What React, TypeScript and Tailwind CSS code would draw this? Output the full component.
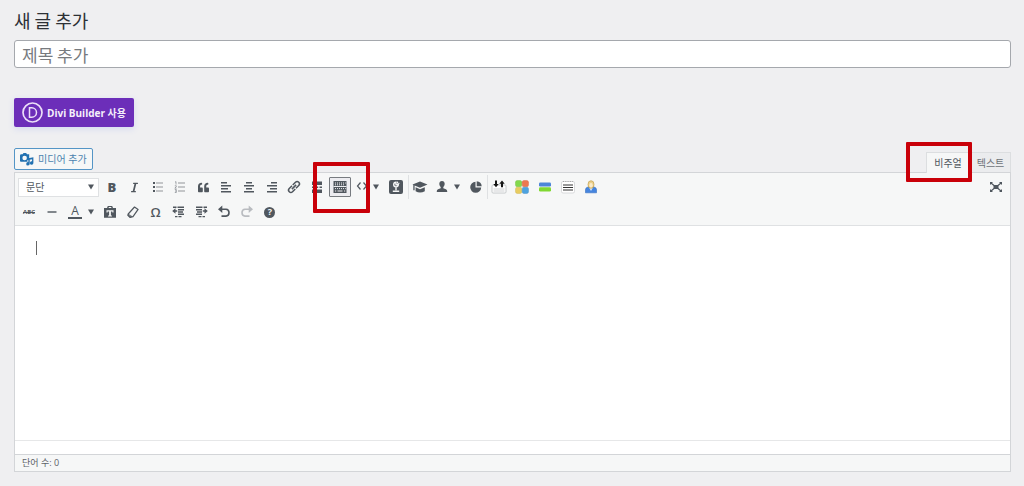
import type { ReactNode } from 'react';
import { FaItalic, FaQuoteLeft } from 'react-icons/fa';

function Icon({ children, className = 'size-4' }: { children: ReactNode; className?: string }) {
  return (
    <svg viewBox="0 0 16 16" className={className} fill="currentColor" aria-hidden="true">
      {children}
    </svg>
  );
}

function ToolButton({ label, children, className = 'w-[22px]' }: { label: string; children: ReactNode; className?: string }) {
  return (
    <button type="button" aria-label={label} className={`flex h-5 shrink-0 items-center justify-center ${className}`}>
      {children}
    </button>
  );
}

function Caret() {
  return (
    <svg viewBox="0 0 6 6" className="size-1.5" fill="currentColor" aria-hidden="true">
      <path d="M0 .5h6L3 5.5z" />
    </svg>
  );
}

function Divider() {
  return <span className="h-6 w-px shrink-0 bg-[#dfe1e3]" />;
}

function Highlight({ className }: { className: string }) {
  return <span className={`pointer-events-none absolute z-10 rounded-[1px] border-4 border-[#c90009] ${className}`} />;
}

function BulletList() {
  return (
    <Icon>
      <rect x="3" y="3" width="2" height="2" />
      <rect x="3" y="7" width="2" height="2" />
      <rect x="3" y="11" width="2" height="2" />
      <path opacity=".6" d="M6 3.500h7v1H6zM6 7.500h7v1H6zM6 11.500h7v1H6z" />
    </Icon>
  );
}

function NumberList() {
  return (
    <Icon>
      <path opacity=".6" d="M6 3.500h7v1H6zM6 7.500h7v1H6zM6 11.500h7v1H6z" />
      <path opacity=".6" fill="none" stroke="currentColor" strokeWidth=".8" d="M3 3.200l1-.6v3M2.800 6.800h1.500v.9L2.800 9.200h1.800M2.800 10.500h1.500v3H2.800M3 12h1.300" />
    </Icon>
  );
}

function AlignLeft() {
  return (
    <Icon>
      <path d="M3 3h6v1.600H3zM3 6h10v1.600H3zM3 9h7v1.600H3zM3 12h10v1.600H3z" />
    </Icon>
  );
}

function AlignCenter() {
  return (
    <Icon>
      <path d="M5 3h6v1.600H5zM3 6h10v1.600H3zM5 9h6v1.600H5zM3 12h10v1.600H3z" />
    </Icon>
  );
}

function AlignRight() {
  return (
    <Icon>
      <path d="M7 3h6v1.600H7zM3 6h10v1.600H3zM6 9h7v1.600H6zM3 12h10v1.600H3z" />
    </Icon>
  );
}

function LinkIcon() {
  return (
    <Icon>
      <g transform="rotate(-45 8 8)" fill="none" stroke="currentColor" strokeWidth="1.500">
        <path d="M7.500 5.700H3.600a2.300 2.300 0 0 0 0 4.600h3.900M8.500 5.700h3.900a2.300 2.300 0 0 1 0 4.600H8.500M5 8h6" />
      </g>
    </Icon>
  );
}

function ReadMore() {
  return (
    <Icon>
      <path d="M3 2.500h10V6H3zM3 10.500h10V14H3zM3 7.500h2.500v1.500H3zM6.800 7.500h2.400v1.500H6.800zM10.500 7.500H13v1.500h-2.500z" />
    </Icon>
  );
}

function Keyboard() {
  return (
    <Icon>
      <path d="M1.500 2h13v12h-13z" />
      <path
        fill="none"
        stroke="#ececf0"
        strokeWidth="1"
        d="M1.500 7.500h13M3 4h1M5 4h1M7 4h1M9 4h1M11 4h1M13 4h.8M3 5.800h1M5 5.800h1M7 5.800h1M9 5.800h1M11 5.800h1M3 9.600h1M5 9.600h1M7 9.600h1M9 9.600h1M11 9.600h1M13 9.600h.8M3 12h1.200M5.500 12h5M12 12h1.200"
      />
    </Icon>
  );
}

function CodeIcon() {
  return (
    <Icon>
      <path fill="none" stroke="currentColor" strokeWidth="1.200" d="M6.500 3.500L3.500 7l3 3.500M9.500 3.500l3 3.500-3 3.500" />
    </Icon>
  );
}

function BlockBadge() {
  return (
    <Icon>
      <rect x="1" y="1" width="14" height="14" rx="2" />
      <g fill="none" stroke="#f6f7f7" strokeWidth="1.400">
        <path d="M8 3.300a2.300 2.300 0 1 0 2.300 2.500H8z" />
        <path d="M9.500 2.600v1.700h2" strokeWidth="1" />
        <path d="M8 8.200v3M4.800 12.300h6.400" />
      </g>
    </Icon>
  );
}

function GradCap() {
  return (
    <Icon>
      <path d="M8 2.500l7.500 3L8 8.700 2.600 6.500v4.800H1.300V6L.5 5.500z" />
      <path d="M3.600 8.300L8 10.200l4.800-2v4Q8 15 3.600 12.200z" />
    </Icon>
  );
}

function Person() {
  return (
    <Icon>
      <path d="M8 2c1.700 0 2.700 1.200 2.700 2.800 0 1.600-.8 2.500-1.400 3.300v1.200c1.800.5 3.900 1.100 3.900 2.700v1H2.800v-1c0-1.600 2.100-2.200 3.900-2.700V8.100C6.100 7.300 5.300 6.400 5.300 4.800 5.300 3.200 6.300 2 8 2z" />
    </Icon>
  );
}

function Pie() {
  return (
    <Icon>
      <path d="M7.500 2.800v5.700h5.700A5.500 5.500 0 1 1 7.500 2.800z" />
      <path d="M8.700 2.300a5.300 5.300 0 0 1 5 5h-5z" />
    </Icon>
  );
}

function SpacerIcon() {
  return (
    <Icon>
      <rect x="1" y="6" width="14" height="8" rx="1" fill="#fff" stroke="#b9bcbf" strokeWidth=".8" />
      <path stroke="#cfd1d3" d="M2.500 10h11M2.500 12h11" />
      <path fill="#161616" d="M4 1.500h2V5h1.700L5 8.200 2.300 5H4zM10 8.200h2V4.700h1.700L11 1.500 8.300 4.700H10z" />
    </Icon>
  );
}

function ColorBlocks() {
  return (
    <Icon>
      <rect x="1.500" y="1.500" width="6.300" height="6.300" rx="1.700" fill="#83d94c" stroke="#69b83d" strokeWidth=".4" />
      <rect x="8.200" y="1.500" width="6.300" height="6.300" rx="1.700" fill="#ed7850" stroke="#d2603c" strokeWidth=".4" />
      <rect x="1.500" y="8.200" width="6.300" height="6.300" rx="1.700" fill="#e8cc60" stroke="#cbb04c" strokeWidth=".4" />
      <rect x="8.200" y="8.200" width="6.300" height="6.300" rx="1.700" fill="#4ea3df" stroke="#3985bd" strokeWidth=".4" />
    </Icon>
  );
}

function Bars() {
  return (
    <Icon>
      <rect x="2" y="3.500" width="12" height="4" rx="1.300" fill="#4d86d8" />
      <rect x="2" y="8.300" width="12" height="4.200" rx="1.300" fill="#80d832" />
    </Icon>
  );
}

function Note() {
  return (
    <Icon>
      <rect x="1.500" y="2.500" width="13" height="11.500" rx="1.500" fill="#fff" stroke="#d0d2d4" strokeWidth=".8" />
      <path stroke="#999" strokeWidth=".8" strokeDasharray="1 1.300" d="M3 2.500h10" />
      <path stroke="#333" d="M3 6h10M3 8.500h10M3 11h10" />
    </Icon>
  );
}

function Member() {
  return (
    <Icon>
      <path d="M2.500 13.800V10.500q0-2 2.500-2.500h6q2.500.5 2.500 2.500v3.300z" fill="#4585df" stroke="#356fc0" strokeWidth=".6" />
      <path d="M6 8.500L8 12l2-3.500z" fill="#dbe8fa" />
      <ellipse cx="8" cy="5.500" rx="3" ry="3.800" fill="#ecd08b" stroke="#c3a24f" strokeWidth=".7" />
      <ellipse cx="8" cy="6.300" rx="1.700" ry="2.300" fill="#fbeccb" />
    </Icon>
  );
}

function Fullscreen() {
  return (
    <Icon>
      <path d="M2 3h3L2 6zM14 3v3l-3-3zM2 13v-3l3 3zM14 13h-3l3-3z" />
      <path fill="none" stroke="currentColor" strokeWidth="1.200" d="M3 4l3 2.500M13 4l-3 2.500M3 12l3-2.500M13 12l-3-2.500" />
      <rect x="5.500" y="6" width="5" height="4" />
    </Icon>
  );
}

function Clipboard() {
  return (
    <Icon>
      <path fillRule="evenodd" d="M2 4h3l.8-2h4.400l.8 2h3v9.800H2zM6.500 4h3l-.4-1H6.900zM4.500 6.200v2.300h1.100v-1h1.500v4h-1v1.100h3.800v-1.100h-1v-4h1.500v1h1.100V6.200z" />
    </Icon>
  );
}

function Eraser() {
  return (
    <Icon>
      <path fill="none" stroke="currentColor" strokeWidth="1.200" strokeLinejoin="round" d="M9.500 3l3.600 2.400L8 12.600 5 13.400 2.900 11.300l.3-1.300z" />
      <path d="M3.200 9.500l4.600 3.100L5 13.800l-2.300-2.500z" opacity=".75" />
    </Icon>
  );
}

function Indent({ flip = false }: { flip?: boolean }) {
  return (
    <Icon>
      <g transform={flip ? 'translate(16 0) scale(-1 1)' : undefined}>
        <path d="M2 2.500h3.500v1.500H2zM6.500 2.500H13V4H6.500zM7 4.900h6v1.500H7zM7 7.200h5v1.500H7zM7 9.500h6V11H7zM4 11.900h2.500v1.300H4zM7.500 11.900h3v1.300h-3z" />
        <path d="M4.500 4.300v2h1.700v1.400H4.500v2L1.200 7z" />
      </g>
    </Icon>
  );
}

function Undo({ className = 'size-4' }: { className?: string }) {
  return (
    <Icon className={className}>
      <path d="M6.300 1.500v3H10q3.800.3 3.800 4.200 0 3.800-3.800 4.200H5.500v-1.600H10q2.200-.3 2.200-2.600T10 6.100H6.300v3L2 5.300z" />
    </Icon>
  );
}

function MediaIcon() {
  return (
    <Icon className="size-3.5">
      <path fillRule="evenodd" d="M1.500 2.500h1.500L4 1h3l1 1.500h2.500V9H8.500v2H1A1 1 0 0 1 0 10V4a1.500 1.500 0 0 1 1.500-1.500zM5.300 4.200a2.600 2.600 0 1 0 0 5.200 2.600 2.600 0 0 0 0-5.200z" />
      <path d="M9.500 7l5.800-1v6.500a2 2 0 1 1-1.500-1.900V8.400l-2.700.5v4.600a2 2 0 1 1-1.600-1.900z" />
    </Icon>
  );
}

export default function App() {
  return (
    <main className="min-h-screen bg-[#efeff1] pt-2 pr-[13px] pb-3.5 pl-3.5 font-['Open_Sans','Noto_Sans_CJK_KR',sans-serif] text-[#50575e]">
      <h1 className="text-lg leading-6 text-[#2c3035] font-['Noto_Sans_CJK_KR',sans-serif]">새 글 추가</h1>
      <input
        type="text"
        aria-label="제목 추가"
        placeholder="제목 추가"
        className="mt-2 block h-7 w-full rounded-[3px] border border-[#a5a8ad] bg-white px-[7px] font-['Noto_Sans_CJK_KR',sans-serif] text-[17px] leading-6 outline-none placeholder:text-[#777a7e]"
      />
      <button
        type="button"
        className="mt-[30px] flex h-[29px] items-center gap-1 rounded-[2px] bg-[#6c2eb9] px-2 text-[10px] leading-4 font-bold whitespace-nowrap text-[#f5effb] shadow-[0_2px_6px_#d5d9f0]"
      >
        <svg viewBox="0 0 21 21" className="size-[21px]" fill="none" stroke="#ecdff8" aria-hidden="true">
          <circle cx="10.500" cy="10.500" r="9.500" strokeWidth="1.700" />
          <path strokeWidth="1.500" d="M7.500 5.800h2.300a4.700 4.700 0 0 1 0 9.400H7.500z" />
        </svg>
        <span>Divi Builder 사용</span>
      </button>

      <div className="mt-[21px] flex h-6 justify-between">
        <button
          type="button"
          className="flex h-[22px] items-center gap-1 rounded-[2px] border border-[#5495c6] bg-[#f6f7f7] px-[5px] text-[10px] leading-4 whitespace-nowrap text-[#2271b1]"
        >
          <MediaIcon />
          <span className="text-[#4c83af]">미디어 추가</span>
        </button>
        <div className="relative z-10 -mb-px flex items-end text-[10px] leading-4">
          <div className="relative">
            <button type="button" className="block h-[21px] w-[44px] border border-b-0 border-[#dcdee0] bg-[#f6f7f7] text-center whitespace-nowrap">
              비주얼
            </button>
            <Highlight className="-top-2.5 -right-[2px] h-10 w-[66px]" />
          </div>
          <button type="button" className="mb-px h-5 w-[41px] border border-b-0 border-[#dcdee0] bg-[#ebecee] text-center whitespace-nowrap text-[#6d7177]">
            텍스트
          </button>
        </div>
      </div>

      <section className="border border-[#d3d5d8] bg-white">
        <div className="flex flex-col gap-px border-b border-[#dfe1e3] bg-[#f6f7f7] px-[3px] pt-0.5 pb-px">
          <div className="flex h-6 items-center">
            <div className="relative mr-0.5 shrink-0">
              <select aria-label="문단 형식" className="block h-[19px] w-[81px] appearance-none border border-[#dfe1e3] bg-white pl-[7px] text-[10px] leading-4 outline-none">
                <option>문단</option>
              </select>
              <span className="pointer-events-none absolute inset-y-0 right-[5px] flex items-center">
                <Caret />
              </span>
            </div>
            <div className="flex w-[250px] shrink-0 justify-between">
              <ToolButton label="굵게"><span className="text-[13px] leading-4 font-extrabold">B</span></ToolButton>
              <ToolButton label="기울임꼴"><FaItalic className="size-[11px]" /></ToolButton>
              <ToolButton label="글머리 기호 목록"><BulletList /></ToolButton>
              <ToolButton label="번호 목록"><NumberList /></ToolButton>
              <ToolButton label="인용"><FaQuoteLeft className="size-[11px]" /></ToolButton>
              <ToolButton label="왼쪽 정렬"><AlignLeft /></ToolButton>
              <ToolButton label="가운데 정렬"><AlignCenter /></ToolButton>
              <ToolButton label="오른쪽 정렬"><AlignRight /></ToolButton>
              <ToolButton label="링크"><LinkIcon /></ToolButton>
              <ToolButton label="더 보기 태그"><ReadMore /></ToolButton>
              <div className="relative">
                <ToolButton label="툴바 토글" className="w-[22px] rounded-[1px] border border-[#777b80] bg-[#ececf0]"><Keyboard /></ToolButton>
                <Highlight className="-top-[15px] -left-4 h-[51px] w-[57px]" />
              </div>
            </div>
            <ToolButton label="코드"><CodeIcon /></ToolButton>
            <ToolButton label="코드 옵션" className="w-1.5"><Caret /></ToolButton>
            <ToolButton label="블록" className="ml-[5px] w-6"><BlockBadge /></ToolButton>
            <Divider />
            <ToolButton label="강좌"><GradCap /></ToolButton>
            <ToolButton label="회원"><Person /></ToolButton>
            <ToolButton label="회원 옵션" className="ml-px w-1.5"><Caret /></ToolButton>
            <ToolButton label="차트" className="ml-[5px] w-[22px]"><Pie /></ToolButton>
            <Divider />
            <div className="flex w-[114px] shrink-0 justify-between">
              <ToolButton label="간격"><SpacerIcon /></ToolButton>
              <ToolButton label="색상 블록"><ColorBlocks /></ToolButton>
              <ToolButton label="버튼"><Bars /></ToolButton>
              <ToolButton label="노트"><Note /></ToolButton>
              <ToolButton label="멤버"><Member /></ToolButton>
            </div>
            <ToolButton label="전체 화면" className="ml-auto w-[22px]"><Fullscreen /></ToolButton>
          </div>
          <div className="flex h-6 items-center">
            <ToolButton label="취소선"><span className="text-[6px] leading-3 font-bold line-through">ABC</span></ToolButton>
            <ToolButton label="가로줄" className="w-6"><Icon><path d="M3.500 7.300h9v1.400h-9z" /></Icon></ToolButton>
            <ToolButton label="글자색"><span className="w-3.5 border-b-2 border-current text-center text-xs leading-3">A</span></ToolButton>
            <ToolButton label="글자색 옵션" className="ml-0.5 w-1.5"><Caret /></ToolButton>
            <div className="ml-[5px] flex w-[182px] shrink-0 justify-between">
              <ToolButton label="텍스트로 붙여넣기"><Clipboard /></ToolButton>
              <ToolButton label="서식 지우기"><Eraser /></ToolButton>
              <ToolButton label="특수 문자"><span className="text-[13px] leading-4 font-semibold">Ω</span></ToolButton>
              <ToolButton label="내어쓰기"><Indent /></ToolButton>
              <ToolButton label="들여쓰기"><Indent flip /></ToolButton>
              <ToolButton label="실행 취소"><Undo /></ToolButton>
              <ToolButton label="다시 실행"><Undo className="size-4 -scale-x-100 text-[#b9bcc0]" /></ToolButton>
              <ToolButton label="도움말"><span className="flex size-[11px] items-center justify-center rounded-full bg-current"><span className="text-[9px] leading-3 font-bold text-[#f6f7f7]">?</span></span></ToolButton>
            </div>
          </div>
        </div>
        <div className="relative">
          <textarea aria-label="본문" className="block h-[214px] w-full resize-none bg-white px-[22px] py-3.5 text-xs leading-4 outline-none" />
          <span className="pointer-events-none absolute top-[15px] left-[21px] h-3.5 w-px bg-[#666]" />
        </div>
        <div className="h-[15px] border-y border-t-[#e6e7e8] border-b-[#d3d5d8]" />
        <p className="h-4 bg-[#f6f7f7] px-[7px] text-[9px] leading-4 text-[#5d6268]">단어 수: 0</p>
      </section>
    </main>
  );
}
